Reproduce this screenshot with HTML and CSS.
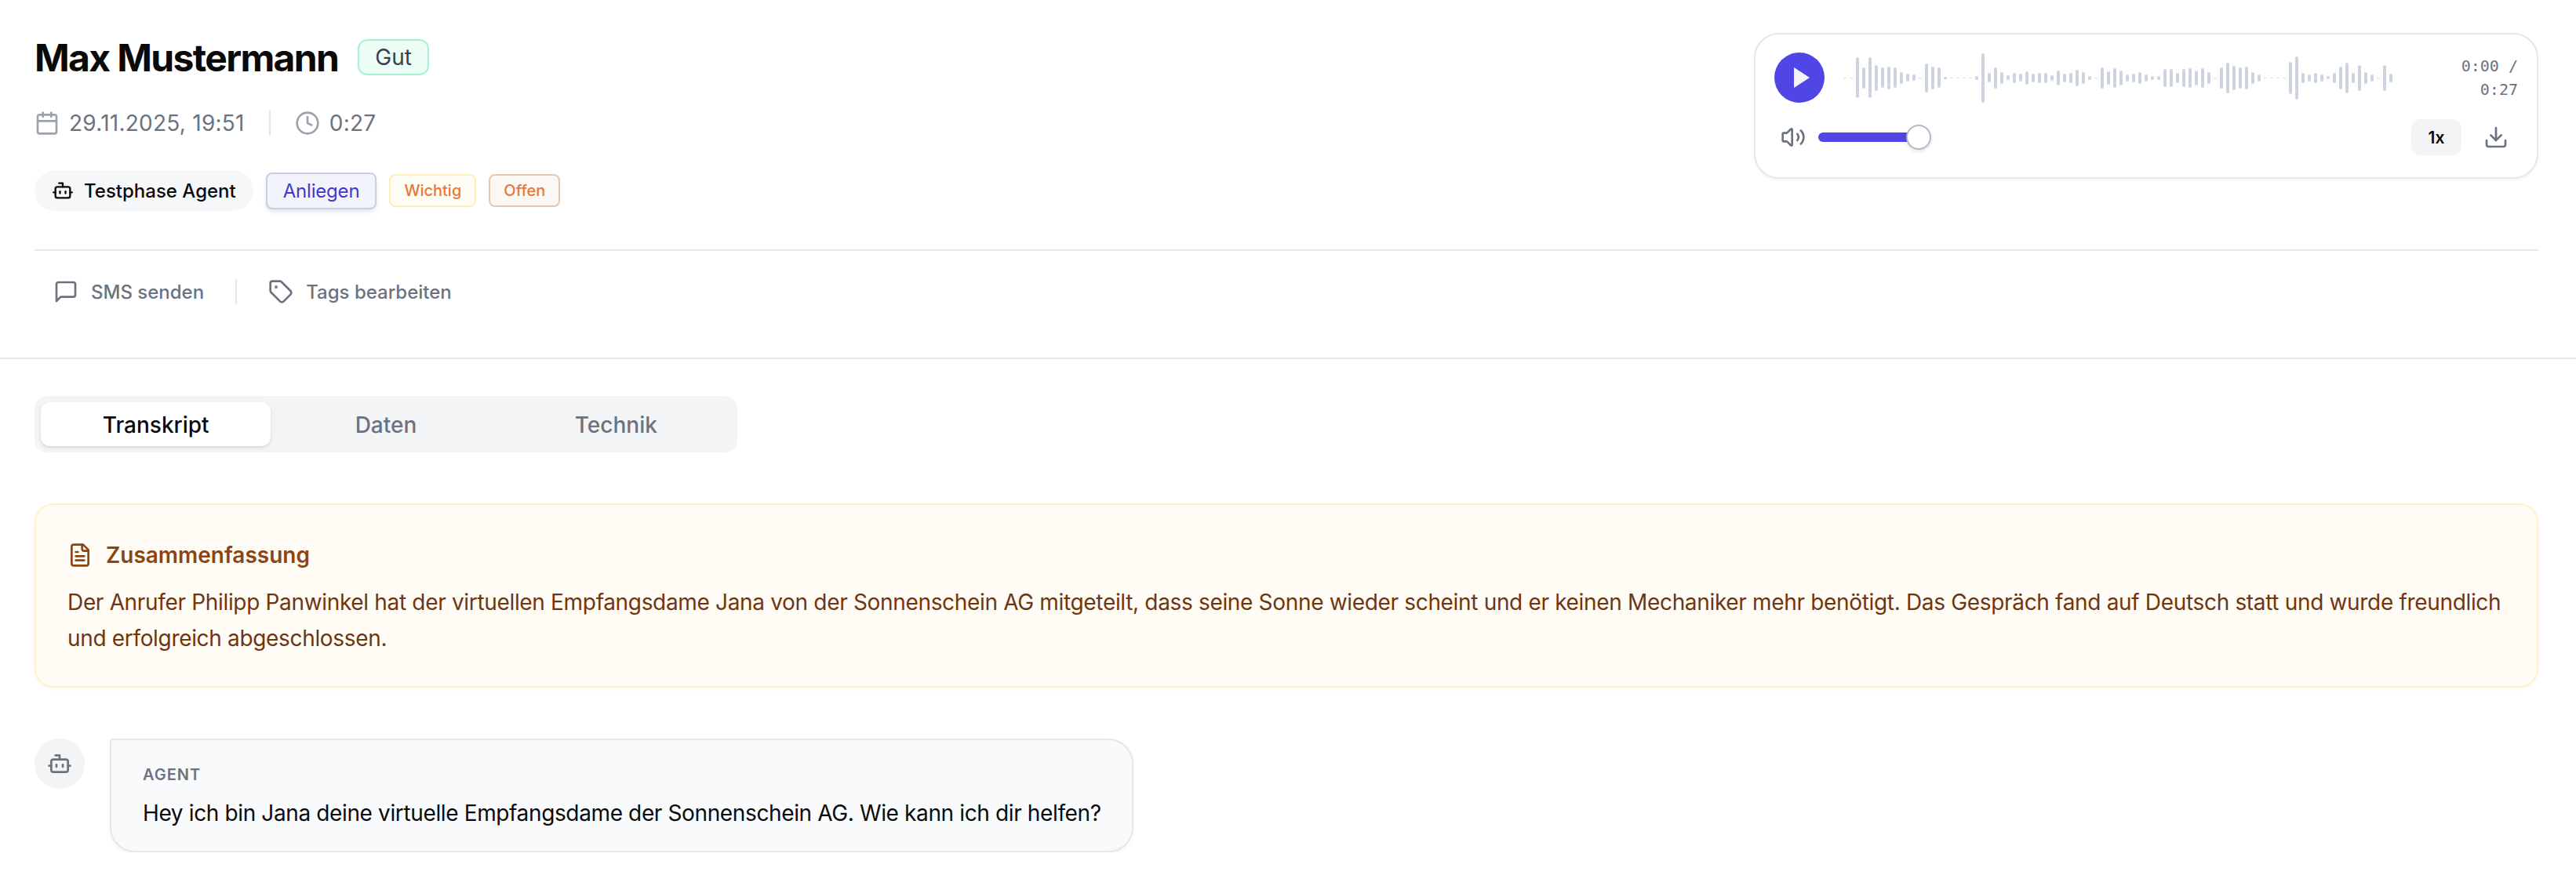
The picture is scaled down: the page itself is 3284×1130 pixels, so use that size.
FILE: index.html
```html
<!DOCTYPE html>
<html lang="de">
<head>
<meta charset="utf-8">
<title>Max Mustermann</title>
<link rel="stylesheet" href="styles.css">
</head>
<body>
<header class="header">
  <div class="top">
    <div class="info">
      <div class="title-row">
        <h1 class="title">Max Mustermann</h1>
        <span class="rating">Gut</span>
      </div>
      <div class="meta">
        <span class="meta-item">
          <svg class="icon i32 muted" viewBox="0 0 24 24"><path d="M8 2v4"/><path d="M16 2v4"/><rect width="18" height="18" x="3" y="4" rx="2"/><path d="M3 10h18"/></svg>
          29.11.2025, 19:51
        </span>
        <span class="vline"></span>
        <span class="meta-item">
          <svg class="icon i32 muted" viewBox="0 0 24 24"><circle cx="12" cy="12" r="10"/><polyline points="12 6 12 12 16 14"/></svg>
          0:27
        </span>
      </div>
      <div class="tags">
        <span class="agent-pill">
          <svg class="icon i28" viewBox="0 0 24 24"><path d="M12 8V4H8"/><rect width="16" height="12" x="4" y="8" rx="2"/><path d="M2 14h2"/><path d="M20 14h2"/><path d="M15 13v2"/><path d="M9 13v2"/></svg>
          Testphase Agent
        </span>
        <span class="tag tag-main">Anliegen</span>
        <span class="tag tag-small tag-amber">Wichtig</span>
        <span class="tag tag-small tag-open">Offen</span>
      </div>
    </div>
    <div class="player">
      <div class="player-row">
        <button class="play" type="button" aria-label="Play">
          <svg class="play-icon" viewBox="0 0 22 28"><path d="M1 1 L21 14 L1 27 Z"/></svg>
        </button>
        <div class="wave">
          <i class="dash"></i><i class="dash"></i>
          <i style="height:52px"></i><i style="height:27px"></i><i style="height:52px"></i><i style="height:33px"></i><i style="height:26px"></i><i style="height:29px"></i><i style="height:26px"></i><i style="height:15px"></i><i style="height:10px"></i><i style="height:8px"></i>
          <i class="dash"></i>
          <i style="height:37px"></i><i style="height:29px"></i><i style="height:26px"></i>
          <i style="height:3px"></i><i class="dash"></i><i class="dash"></i><i class="dash"></i><i class="dash"></i>
          <i style="height:5px"></i><i style="height:63px"></i><i style="height:12px"></i><i style="height:27px"></i><i style="height:15px"></i><i style="height:6px"></i><i style="height:13px"></i><i style="height:10px"></i>
          <i style="height:17px"></i><i style="height:11px"></i><i style="height:13px"></i><i style="height:13px"></i><i style="height:7px"></i><i style="height:19px"></i><i style="height:11px"></i><i style="height:13px"></i><i style="height:21px"></i><i style="height:15px"></i><i style="height:5px"></i>
          <i class="dash"></i>
          <i style="height:27px"></i><i style="height:17px"></i><i style="height:25px"></i><i style="height:19px"></i><i style="height:9px"></i><i style="height:11px"></i><i style="height:15px"></i><i style="height:9px"></i><i style="height:5px"></i><i style="height:5px"></i><i style="height:23px"></i><i style="height:23px"></i><i style="height:13px"></i><i style="height:23px"></i><i style="height:25px"></i><i style="height:19px"></i><i style="height:25px"></i>
          <i style="height:15px"></i>
          <i class="dash"></i>
          <i style="height:27px"></i><i style="height:39px"></i><i style="height:31px"></i><i style="height:27px"></i><i style="height:29px"></i><i style="height:15px"></i><i style="height:9px"></i>
          <i class="dash"></i><i class="dash"></i><i class="dash"></i><i class="dash"></i>
          <i style="height:41px"></i><i style="height:55px"></i><i style="height:13px"></i><i style="height:9px"></i><i style="height:13px"></i><i style="height:9px"></i><i style="height:4px"></i><i style="height:13px"></i><i style="height:29px"></i><i style="height:39px"></i><i style="height:13px"></i><i style="height:33px"></i><i style="height:15px"></i><i style="height:9px"></i>
          <i class="dash"></i>
          <i style="height:33px"></i><i style="height:11px"></i>
        </div>
        <div class="time">0:00 / 0:27</div>
      </div>
      <div class="player-row controls">
        <svg class="icon i32 speaker" viewBox="0 0 24 24"><path d="M11 4.702a.705.705 0 0 0-1.203-.498L6.413 7.587A1.4 1.4 0 0 1 5.416 8H3a1 1 0 0 0-1 1v6a1 1 0 0 0 1 1h2.416a1.4 1.4 0 0 1 .997.413l3.383 3.384A.705.705 0 0 0 11 19.298z"/><path d="M16 9a5 5 0 0 1 0 6"/><path d="M19.364 18.364a9 9 0 0 0 0-12.728"/></svg>
        <div class="slider"><span class="thumb"></span></div>
        <button class="speed" type="button">1x</button>
        <button class="dl" type="button" aria-label="Download">
          <svg class="icon i32" viewBox="0 0 24 24"><path d="M21 15v4a2 2 0 0 1-2 2H5a2 2 0 0 1-2-2v-4"/><polyline points="7 10 12 15 17 10"/><line x1="12" x2="12" y1="15" y2="3"/></svg>
        </button>
      </div>
    </div>
  </div>
  <div class="actions">
    <button class="action" type="button">
      <svg class="icon i32" viewBox="0 0 24 24"><path d="M21 15a2 2 0 0 1-2 2H7l-4 4V5a2 2 0 0 1 2-2h14a2 2 0 0 1 2 2z"/></svg>
      SMS senden
    </button>
    <span class="vline"></span>
    <button class="action" type="button">
      <svg class="icon i32" viewBox="0 0 24 24"><path d="M12.586 2.586A2 2 0 0 0 11.172 2H4a2 2 0 0 0-2 2v7.172a2 2 0 0 0 .586 1.414l8.704 8.704a2.426 2.426 0 0 0 3.42 0l6.58-6.58a2.426 2.426 0 0 0 0-3.42z"/><circle cx="7.5" cy="7.5" r=".5" fill="currentColor"/></svg>
      Tags bearbeiten
    </button>
  </div>
</header>
<main class="content">
  <div class="tabs">
    <button class="tab active" type="button">Transkript</button>
    <button class="tab" type="button">Daten</button>
    <button class="tab" type="button">Technik</button>
  </div>
  <section class="summary">
    <h2 class="summary-head">
      <svg class="icon i32" viewBox="0 0 24 24"><path d="M15 2H6a2 2 0 0 0-2 2v16a2 2 0 0 0 2 2h12a2 2 0 0 0 2-2V7Z"/><path d="M14 2v4a2 2 0 0 0 2 2h4"/><path d="M10 9H8"/><path d="M16 13H8"/><path d="M16 17H8"/></svg>
      Zusammenfassung
    </h2>
    <p class="summary-text">Der Anrufer Philipp Panwinkel hat der virtuellen Empfangsdame Jana von der Sonnenschein AG mitgeteilt, dass seine Sonne wieder scheint und er keinen Mechaniker mehr benötigt. Das Gespräch fand auf Deutsch statt und wurde freundlich und erfolgreich abgeschlossen.</p>
  </section>
  <div class="message">
    <div class="avatar">
      <svg class="icon i32" viewBox="0 0 24 24"><path d="M12 8V4H8"/><rect width="16" height="12" x="4" y="8" rx="2"/><path d="M2 14h2"/><path d="M20 14h2"/><path d="M15 13v2"/><path d="M9 13v2"/></svg>
    </div>
    <div class="bubble">
      <div class="role">AGENT</div>
      <p class="bubble-text">Hey ich bin Jana deine virtuelle Empfangsdame der Sonnenschein AG. Wie kann ich dir helfen?</p>
    </div>
  </div>
</main>
</body>
</html>
```
FILE: styles.css
```css
* { box-sizing: border-box; }
html, body { margin: 0; padding: 0; background: #fff; }
body { font-family: Inter, "Noto Sans", sans-serif; color: #0a0a0a; }
button { font-family: inherit; border: 0; background: none; padding: 0; margin: 0; cursor: pointer; }
h1, h2, p { margin: 0; }

.icon { fill: none; stroke: currentColor; stroke-width: 2; stroke-linecap: round; stroke-linejoin: round; flex: none; display: block; }
.i32 { width: 32px; height: 32px; }
.i28 { width: 28px; height: 28px; }
.muted { color: #9ca3af; }

.header { border-bottom: 2px solid #e5e7eb; padding: 42px 48px 0 44px; height: 458px; }
.top { display: flex; justify-content: space-between; align-items: flex-start; height: 278px; border-bottom: 2px solid #e5e7eb; }
.info { padding-top: 8px; }

.title-row { display: flex; align-items: center; gap: 25px; height: 46px; }
.title { font-size: 48px; line-height: 46px; padding-top: 2px; font-weight: 700; letter-spacing: -1.65px; color: #0a0a0a; }
.rating { display: flex; align-items: center; height: 46px; padding: 0 20px; font-size: 28px; color: #374151; background: #ecfdf5; border: 2px solid #a7f3d0; border-radius: 12px; }

.meta { display: flex; align-items: center; gap: 31px; margin-top: 45px; height: 32px; font-size: 28px; letter-spacing: 0.25px; color: #6b7280; }
.meta-item { display: flex; align-items: center; gap: 12px; }
.vline { display: block; width: 2px; height: 32px; background: #e5e7eb; flex: none; }

.tags { display: flex; align-items: center; gap: 16px; margin-top: 44px; height: 52px; }
.agent-pill { display: flex; align-items: center; gap: 13px; height: 52px; padding: 0 22px; font-size: 24px; font-weight: 500; color: #0a0a0a; background: #f6f7f9; border-radius: 26px; }
.tag { display: flex; align-items: center; border-radius: 8px; }
.tag-main { height: 47px; padding: 0 20px; font-size: 24px; font-weight: 400; letter-spacing: -0.2px; color: #4338ca; background: #f3f4fb; border: 2px solid #c7cfe2; box-shadow: 0 3px 5px rgba(99, 102, 140, 0.16); }
.tag-small { height: 42px; padding: 0 17px; font-size: 20px; font-weight: 500; color: #e5793a; }
.tag-amber { background: #fffcf3; border: 2px solid #fdeeb9; }
.tag-open { background: #fbf8f4; border: 2px solid #e6c8b2; }

.player { width: 1000px; height: 186px; background: #fff; border: 2px solid #e5e7eb; border-radius: 32px; box-shadow: 0 2px 4px rgba(0, 0, 0, 0.05); padding: 23px 24px 0; }
.player-row { display: flex; align-items: center; }
.play { width: 64px; height: 64px; border-radius: 50%; background: #4f46e5; display: flex; align-items: center; justify-content: center; flex: none; padding-left: 5px; }
.play-icon { width: 22px; height: 28px; fill: #f3f4f6; display: block; }
.wave { display: flex; align-items: center; gap: 4px; margin-left: 24px; height: 64px; }
.wave i { display: block; width: 4px; border-radius: 2px; background: #cdd4e1; flex: none; }
.wave i.dash { height: 1px; background: #d5dae5; }
.time { margin-left: auto; width: 92px; text-align: right; font-family: "DejaVu Sans Mono", "Liberation Mono", monospace; font-size: 20px; line-height: 30px; color: #6b7280; }

.controls { margin-top: 21px; height: 46px; }
.speaker { color: #6b7280; margin-left: 8px; }
.slider { position: relative; width: 128px; height: 12px; border-radius: 6px; background: #4f46e5; margin-left: 16px; }
.thumb { position: absolute; right: -16px; top: -10px; width: 32px; height: 32px; border-radius: 50%; background: #fff; border: 2px solid #b5b8c6; box-shadow: 0 2px 4px rgba(0, 0, 0, 0.12); }
.speed { margin-left: auto; width: 64px; height: 46px; border-radius: 12px; background: #f3f4f6; font-size: 21px; font-weight: 600; color: #0a0a0a; }
.dl { width: 56px; height: 46px; margin-left: 16px; color: #6b7280; display: flex; align-items: center; justify-content: center; }

.actions { display: flex; align-items: center; gap: 16px; padding-top: 32px; }
.action { display: flex; align-items: center; gap: 16px; height: 40px; padding: 0 24px; font-size: 24px; font-weight: 500; color: #6b7280; }

.content { padding: 47px 48px 0 44px; }
.tabs { display: flex; width: 896px; height: 72px; padding: 8px; background: #f3f4f6; border-radius: 16px; }
.tab { flex: 1; border-radius: 12px; padding-top: 2px; font-size: 28px; font-weight: 500; color: #6b7280; }
.tab.active { background: #fff; color: #0a0a0a; box-shadow: 0 2px 4px rgba(0, 0, 0, 0.12); }

.summary { margin-top: 65px; height: 235px; background: #fffcf5; border: 2px solid #fef3c7; border-radius: 24px; box-shadow: 0 2px 4px rgba(0, 0, 0, 0.03); padding: 44px 40px 0; }
.summary-head { display: flex; align-items: center; gap: 17px; height: 40px; font-size: 28px; font-weight: 600; color: #8b4513; }
.summary-text { margin-top: 17px; font-size: 28px; line-height: 46px; letter-spacing: -0.33px; color: #6f3510; }

.message { display: flex; align-items: flex-start; gap: 32px; margin-top: 65px; }
.avatar { width: 64px; height: 64px; border-radius: 50%; background: #f3f4f6; color: #6b7280; display: flex; align-items: center; justify-content: center; flex: none; }
.bubble { background: #f9fafb; border: 2px solid #e5e7eb; border-radius: 4px 32px 32px 32px; box-shadow: 0 2px 4px rgba(0, 0, 0, 0.05); padding: 28px 24px 0 40px; height: 145px; width: 1305px; }
.role { font-size: 20px; line-height: 32px; font-weight: 600; letter-spacing: 1px; color: #6b7280; }
.bubble-text { margin-top: 11px; font-size: 28px; line-height: 44px; letter-spacing: -0.37px; color: #0a0a0a; }
```
